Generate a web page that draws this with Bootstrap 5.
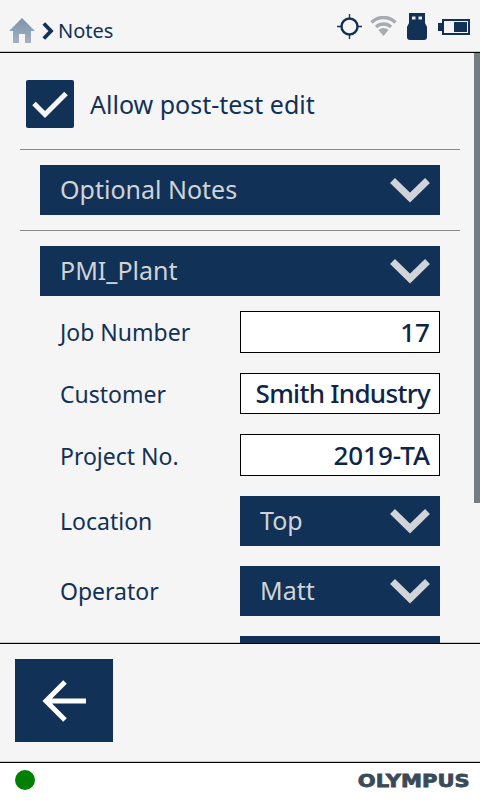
<!DOCTYPE html>
<html lang="en"><head><meta charset="utf-8"><title>Notes</title>
<link rel="stylesheet" href="https://cdn.jsdelivr.net/npm/bootstrap@5.3.0/dist/css/bootstrap.min.css">
<style>
html,body{height:100%;}
body{width:480px;height:800px;overflow:hidden;background:#fff;font-family:"Noto Sans","Open Sans",sans-serif;color:#123156;}
.shell{width:480px;height:800px;}
.topbar{height:53px;background:#f5f5f5;border-bottom:1px solid #000;box-shadow:inset 0 -1px 0 #c8c8c8;padding:0 10px 0 9px;flex:none;}
.crumbs{padding-top:8px;}
.crumb-sep{margin-left:7px;margin-top:2px;}
.crumb{font-size:20px;line-height:1;margin-left:4px;margin-top:2px;}
.topicons{margin-left:auto;height:52px;}
.ic-target{margin-right:8px;}
.ic-wifi{margin-right:10px;}
.ic-usb{margin-right:11px;}
.ic-batt{margin-top:2px;}
.body-area{flex:1 1 auto;background:#f5f5f5;overflow:hidden;position:relative;box-shadow:inset 0 -1px 0 #c8c8c8;min-height:0;}
.scroll-thumb{position:absolute;right:0;top:0;width:6px;height:450px;background:#747e80;}
.check-row{padding:27px 0 0 26px;height:96px;}
.check-box{width:48px;height:48px;background:#123156;border-radius:2px;flex:none;}
.check-label{font-size:25px;margin-left:16px;line-height:48px;height:48px;}
.sep{height:1px;background:#8a8a8a;margin:0 20px;}
.dd{height:50px;background:#123156;margin:0 40px;color:#d0d4d9;font-size:25px;padding:0 10px 0 20px;}
.dd-half{width:200px;margin:0 0 0 auto;padding-left:20px;}
.chev{margin-left:auto;flex:none;}
.form-line{margin:0 40px;}
.gap15{margin-top:15px;}
.gap20{margin-top:20px;}
.lbl{width:200px;font-size:23px;padding-left:20px;flex:none;line-height:1;}
.lbl-low{padding-top:2px;}
.val{width:200px;height:42px;background:#fff;border:1px solid #000;font-size:26px;font-weight:500;color:#0f2547;padding:0 9px 0 0;line-height:1;white-space:nowrap;}
.val-short{height:41px;letter-spacing:-.7px;padding-bottom:2px;}
.footbar{height:120px;background:#f5f5f5;border-top:1px solid #000;border-bottom:1px solid #000;box-shadow:inset 0 -1px 0 #c8c8c8;padding:15px;flex:none;}
.backbtn{width:98px;height:83px;background:#123156;}
.statusbar{height:37px;background:#fff;padding:0 10px 3px 15px;flex:none;}
.dot{width:20px;height:20px;background:#008000;border-radius:50%;}
.logo{font-family:"DejaVu Sans",sans-serif;font-weight:700;font-size:18px;color:#3a4a58;line-height:1;margin-left:auto;margin-top:1px;transform:scaleX(1.17);transform-origin:right center;-webkit-text-stroke:.8px #3a4a58;}
</style></head>
<body>
<div class="shell d-flex flex-column">
  <div class="topbar d-flex align-items-center">
    <div class="crumbs d-flex align-items-center">
      <svg width="26" height="25" viewBox="0 0 26 25"><defs><linearGradient id="hg" x1="0" y1="0" x2="0" y2="1"><stop offset="0" stop-color="#7d92aa"/><stop offset="1" stop-color="#a3b1c2"/></linearGradient></defs><path d="M13 0 L26 13 H22 V25 H16 V16 H10 V25 H4 V13 H0 Z" fill="url(#hg)"/></svg>
      <svg class="crumb-sep" width="12" height="18" viewBox="0 0 12 18"><path d="M1.800 1.500 L9 9 L1.800 16.500" fill="none" stroke="#123156" stroke-width="3.800"/></svg>
      <span class="crumb">Notes</span>
    </div>
    <div class="topicons d-flex align-items-center">
      <svg class="ic-target" width="25" height="25" viewBox="0 0 25 25"><circle cx="12.500" cy="12.500" r="8" fill="none" stroke="#123156" stroke-width="2.400"/><path d="M12.500 0V5M12.500 20V25M0 12.500H5M20 12.500H25" stroke="#123156" stroke-width="1.300"/></svg>
      <svg class="ic-wifi" width="27" height="20" viewBox="0 0 27 20"><g fill="none" stroke="#a5abb3" stroke-width="3.400"><path d="M1.500 6.500 A17 17 0 0 1 25.500 6.500"/><path d="M6 11 A11 11 0 0 1 21 11"/></g><path d="M13.500 20 L8.500 14 A7 7 0 0 1 18.500 14 Z" fill="#a5abb3"/></svg>
      <svg class="ic-usb" width="20" height="27" viewBox="0 0 20 27"><path d="M2 0H18V10H2Z" fill="#123156"/><path d="M5 3.500H8.500V6.500H5ZM11.500 3.500H15V6.500H11.500Z" fill="#e8e8e8"/><path d="M2 10H18L20 14V24Q20 27 17 27H3Q0 27 0 24V14Z" fill="#123156"/></svg>
      <svg class="ic-batt" width="32" height="16" viewBox="0 0 32 16"><rect x="0" y="4" width="4" height="8" fill="#123156"/><rect x="5" y="1" width="26" height="14" fill="#f5f5f5" stroke="#123156" stroke-width="2"/><rect x="16" y="3" width="13" height="10" fill="#123156"/></svg>
    </div>
  </div>
  <div class="body-area">
    <div class="scroll-thumb"></div>
    <div class="check-row d-flex align-items-start">
      <div class="check-box d-flex align-items-center justify-content-center"><svg width="38" height="30" viewBox="0 0 38 30"><path d="M3 14.500 L14 25.500 L35 4.500" fill="none" stroke="#f5f5f5" stroke-width="5"/></svg></div>
      <span class="check-label">Allow post-test edit</span>
    </div>
    <div class="sep"></div>
    <div class="dd d-flex align-items-center gap15"><span>Optional Notes</span><svg class="chev" width="40" height="26" viewBox="0 0 40 26"><path d="M2.500 3.500 L20 20.500 L37.500 3.500" fill="none" stroke="#d0d4d9" stroke-width="7"/></svg></div>
    <div class="sep gap15"></div>
    <div class="dd d-flex align-items-center gap15"><span>PMI_Plant</span><svg class="chev" width="40" height="26" viewBox="0 0 40 26"><path d="M2.500 3.500 L20 20.500 L37.500 3.500" fill="none" stroke="#d0d4d9" stroke-width="7"/></svg></div>
    <div class="form-line d-flex align-items-center gap15"><span class="lbl">Job Number</span><div class="val d-flex align-items-center justify-content-end">17</div></div>
    <div class="form-line d-flex align-items-center gap20"><span class="lbl lbl-low">Customer</span><div class="val val-short d-flex align-items-center justify-content-end">Smith Industry</div></div>
    <div class="form-line d-flex align-items-center gap20"><span class="lbl lbl-low">Project No.</span><div class="val d-flex align-items-center justify-content-end">2019-TA</div></div>
    <div class="form-line d-flex align-items-center gap20"><span class="lbl">Location</span><div class="dd dd-half d-flex align-items-center"><span>Top</span><svg class="chev" width="40" height="26" viewBox="0 0 40 26"><path d="M2.500 3.500 L20 20.500 L37.500 3.500" fill="none" stroke="#d0d4d9" stroke-width="7"/></svg></div></div>
    <div class="form-line d-flex align-items-center gap20"><span class="lbl">Operator</span><div class="dd dd-half d-flex align-items-center"><span>Matt</span><svg class="chev" width="40" height="26" viewBox="0 0 40 26"><path d="M2.500 3.500 L20 20.500 L37.500 3.500" fill="none" stroke="#d0d4d9" stroke-width="7"/></svg></div></div>
    <div class="form-line d-flex align-items-center gap20"><span class="lbl"></span><div class="dd dd-half"></div></div>
  </div>
  <div class="footbar">
    <div class="backbtn d-flex align-items-center justify-content-center"><svg width="44" height="44" viewBox="0 0 44 44"><path d="M23 3 L4 22 L23 41 M4 22 H44" fill="none" stroke="#fff" stroke-width="5"/></svg></div>
  </div>
  <div class="statusbar d-flex align-items-center">
    <div class="dot"></div>
    <span class="logo">OLYMPUS</span>
  </div>
</div>
</body></html>
